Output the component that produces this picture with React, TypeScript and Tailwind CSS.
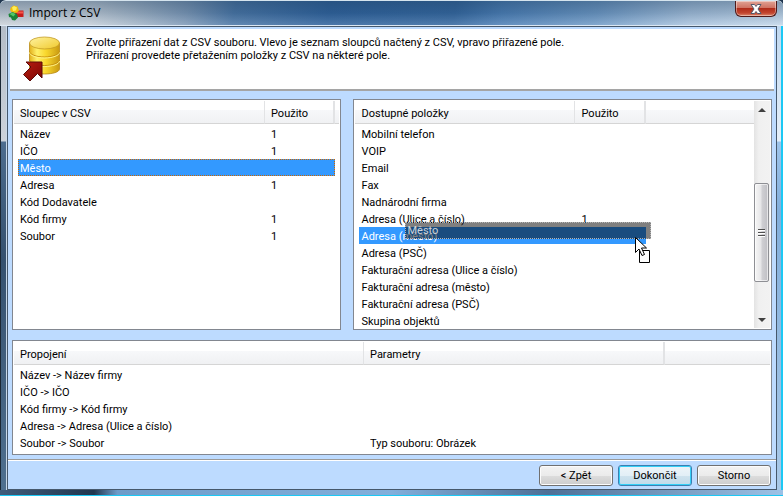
import { useState } from "react";
import clsx from "clsx";

type Row = { name: string; value?: string };

const CSV_COLUMNS: Row[] = [
  { name: "Název", value: "1" },
  { name: "IČO", value: "1" },
  { name: "Město" },
  { name: "Adresa", value: "1" },
  { name: "Kód Dodavatele" },
  { name: "Kód firmy", value: "1" },
  { name: "Soubor", value: "1" },
];

const FIELDS: Row[] = [
  { name: "Mobilní telefon" },
  { name: "VOIP" },
  { name: "Email" },
  { name: "Fax" },
  { name: "Nadnárodní firma" },
  { name: "Adresa (Ulice a číslo)", value: "1" },
  { name: "Adresa (město)" },
  { name: "Adresa (PSČ)" },
  { name: "Fakturační adresa (Ulice a číslo)" },
  { name: "Fakturační adresa (město)" },
  { name: "Fakturační adresa (PSČ)" },
  { name: "Skupina objektů" },
];

const LINKS: Row[] = [
  { name: "Název -> Název firmy" },
  { name: "IČO -> IČO" },
  { name: "Kód firmy -> Kód firmy" },
  { name: "Adresa -> Adresa (Ulice a číslo)" },
  { name: "Soubor -> Soubor", value: "Typ souboru: Obrázek" },
];

const panelClass = "border border-[#828790] bg-white p-px";

const headClass =
  "h-[23px] border-b border-[#d5d5d5] bg-[linear-gradient(to_bottom,#ffffff_9px,#f7f8fa_9px,#f0f1f3)] p-0 pt-[3px] pl-[6px] text-left leading-4 font-normal";

const cellClass = "h-[17px] truncate leading-[19px]";

const buttonClass =
  "h-[21px] w-[74px] rounded-[3px] border border-[#707070] bg-[linear-gradient(to_bottom,#f3f3f3,#ebebeb_50%,#dddddd_50%,#cdcdcd)] text-center leading-none shadow-[inset_0_0_0_1px_#fcfcfc]";

type ListProps = {
  columns: [string, string];
  widths: [string, string];
  rows: Row[];
  selected?: number;
  focused?: boolean;
  onSelect?: (index: number) => void;
};

function ListTable({ columns, widths, rows, selected, focused, onSelect }: ListProps) {
  return (
    <table className="w-full table-fixed border-separate border-spacing-0">
      <colgroup>
        <col className={widths[0]} />
        <col className={widths[1]} />
        <col />
      </colgroup>
      <thead>
        <tr>
          <th className={clsx(headClass, "border-r border-r-[#e2e3e5]")}>{columns[0]}</th>
          <th className={clsx(headClass, "border-r-2 border-r-[#e2e3e5]")}>{columns[1]}</th>
          <td className={headClass} />
        </tr>
        <tr className="h-px" />
      </thead>
      <tbody>
        {rows.map((row, i) => {
          const active = i === selected;
          return (
            <tr key={row.name} onClick={() => onSelect?.(i)}>
              <td colSpan={active ? 2 : 1} className="p-0 pl-1">
                <div
                  className={clsx(
                    cellClass,
                    "pl-[2px]",
                    active && "bg-[#3399ff] text-white",
                    active && focused && "outline-1 -outline-offset-1 outline-dotted outline-[#cc6600]"
                  )}
                >
                  {row.name}
                </div>
              </td>
              {!active && (
                <td className="p-0 pl-[6px]">
                  <div className={cellClass}>{row.value}</div>
                </td>
              )}
              <td className="p-0" />
            </tr>
          );
        })}
      </tbody>
    </table>
  );
}

function AppIcon() {
  return (
    <svg viewBox="0 0 16 16" className="size-4" aria-hidden="true">
      <path d="M7 5.500h8.500V12H7z" fill="#c81c1c" />
      <path d="M9 6.500h6v2H9z" fill="#f4564c" />
      <path d="M3 2.500 5.500.5l4 1 1.500 4-2.500 2.500-4.500-.5L2 5z" fill="#f0bd0a" />
      <path d="M4 2.500 6 1l3 1.500-1 3-3 .5z" fill="#ffee58" />
      <path d="m.5 9 4-2 4.500 2 1 3.500L7 15.500l-3-.5-1-2.500L1 12z" fill="#1a8238" />
      <path d="m1.500 9 3-1.500L7.500 9l-2 2.500z" fill="#52c766" />
    </svg>
  );
}

function DatabaseIcon() {
  return (
    <svg viewBox="0 0 40 46" className="h-[46px] w-10" aria-hidden="true">
      <defs>
        <linearGradient id="gold">
          <stop offset="0" stopColor="#e3b01c" />
          <stop offset=".25" stopColor="#fff06a" />
          <stop offset=".55" stopColor="#f9d72c" />
          <stop offset="1" stopColor="#c99a12" />
        </linearGradient>
        <linearGradient id="lid" x1="0" y1="0" x2="1" y2="1">
          <stop offset="0" stopColor="#fff3a0" />
          <stop offset="1" stopColor="#f0c92c" />
        </linearGradient>
        <linearGradient id="arrow" x1="0" y1="0" x2="1" y2="1">
          <stop offset="0" stopColor="#b81c10" />
          <stop offset="1" stopColor="#7d0805" />
        </linearGradient>
      </defs>
      <path
        d="M7.500 7v26c0 3 7 5 15 5s15-2 15-5V7z"
        fill="url(#gold)"
        stroke="#b98a1a"
        strokeWidth=".8"
      />
      <path d="M7.500 15.500c0 3 7 5.500 15 5.500s15-2.500 15-5.500" fill="none" stroke="#c8900c" />
      <path d="M7.500 16.500c0 3 7 5.500 15 5.500s15-2.500 15-5.500" fill="none" stroke="#fff38a" />
      <path d="M7.500 24c0 3 7 5.500 15 5.500s15-2.500 15-5.500" fill="none" stroke="#c8900c" />
      <path d="M7.500 25c0 3 7 5.500 15 5.500s15-2.500 15-5.500" fill="none" stroke="#fff38a" />
      <ellipse cx="22.500" cy="7" rx="15" ry="6" fill="url(#lid)" stroke="#c39a25" strokeWidth=".8" />
      <path d="M4 26h16v16l-4.500-4.500L8 45l-6.500-6.500L9 31z" fill="url(#arrow)" stroke="#5c0a08" />
    </svg>
  );
}

function DragCursor() {
  return (
    <svg
      viewBox="0 0 16 26"
      className="absolute top-[15px] left-[230px] h-[26px] w-4"
      aria-hidden="true"
    >
      <path d="M4.500 13.500h10v12h-10z" fill="#fff" stroke="#000" />
      <path d="M.5.500v15l3.500-3.500 3 6.500 2.500-1-3-6.500h5z" fill="#fff" stroke="#000" />
    </svg>
  );
}

function ScrollBar() {
  return (
    <div className="flex w-4 shrink-0 flex-col bg-[linear-gradient(to_right,#e3e3e3,#f0f0f0_30%,#f2f2f2)]">
      <button type="button" aria-label="Nahoru" className="flex h-[17px] items-center justify-center">
        <svg viewBox="0 0 8 4" className="h-1 w-2">
          <path d="M4 0 8 4H0z" fill="#404040" />
        </svg>
      </button>
      <div className="flex grow flex-col">
        <div className="flex-[65]" />
        <div className="flex w-[15px] flex-[97] flex-col items-center justify-center gap-px rounded-xs border border-[#8e8f94] bg-[linear-gradient(to_right,#f6f6f6,#e6e6e8_45%,#cfcfd3_55%,#bfbfc4)] shadow-[inset_0_0_0_1px_#ffffff99]">
          {[0, 1, 2].map((n) => (
            <span key={n} className="h-[2px] w-[7px] border-t border-[#505050] bg-white" />
          ))}
        </div>
        <div className="flex-[29]" />
      </div>
      <button type="button" aria-label="Dolů" className="flex h-[17px] items-center justify-center">
        <svg viewBox="0 0 8 4" className="h-1 w-2">
          <path d="M0 0h8L4 4z" fill="#404040" />
        </svg>
      </button>
    </div>
  );
}

export default function App() {
  const [column, setColumn] = useState(2);
  const [field, setField] = useState(6);

  return (
    <div className="flex h-screen flex-col overflow-hidden bg-[#20364f] font-['Roboto','Liberation_Sans',sans-serif] text-[11px] text-black">
      {/* Titulek okna */}
      <header className="flex h-[26px] shrink-0 items-start justify-between rounded-t-md border-t border-b border-t-[#d5e4ee] border-b-[#dce8f4] bg-[linear-gradient(to_bottom,#1c3c5c66,#1c3c5c33_50%,#ffffff22),linear-gradient(100deg,#ccd3da,#c4ced8_12%,#a9bacb_17%,#7f9ab8_24%,#4a76a6_30%,#2f629c_42%,#34679f_58%,#4c7fb6_64%,#6f9ac6_76%,#a9c3de_88%,#c3d7ea)]">
        <div className="flex h-6 items-center gap-[5px] pl-2">
          <AppIcon />
          <h1 className="font-['Open_Sans','Noto_Sans',sans-serif] text-[12px] leading-4">Import z CSV</h1>
        </div>
        <button
          type="button"
          aria-label="Zavřít"
          className="mr-[6px] flex h-4 w-[42px] items-center justify-center rounded-b-md border border-t-0 border-[#4e1a1a] bg-[linear-gradient(to_bottom,#e0a395,#cf7363_45%,#b02d1b_50%,#c2452f_80%,#dd8a70)] shadow-[inset_0_0_0_1px_#ffffff66]"
        >
          <svg viewBox="0 0 12 10" className="h-[10px] w-3">
            <path d="M1 .5h3.500L6 2.500 7.500.5H11L8 5l3 4.500H7.500L6 7.500l-1.500 2H1L4 5z" fill="#fff" stroke="#555a6b" />
          </svg>
        </button>
      </header>

      <div className="flex min-h-0 grow">
        <div className="w-[7px] shrink-0 border-r border-l border-r-[#c8d8e8] border-l-[#1b2733] bg-[linear-gradient(to_bottom,#b4bdc8,#ccd2da_115px,#4c6c8e_116px,#35516f_50%,#4f708f)]" />

        <main className="flex min-w-0 grow flex-col border border-[#46586c] bg-[#bddbff] px-[2px] pt-[2px]">
          <div className="flex h-[62px] shrink-0 items-start gap-[24px] border-b-2 border-[#a5a5a5] bg-white pt-[7px] pl-3">
            <DatabaseIcon />
            <p className="leading-[13px]">
              Zvolte přiřazení dat z CSV souboru. Vlevo je seznam sloupců načtený z CSV, vpravo přiřazené pole.
              <br />
              Přiřazení provedete přetažením položky z CSV na některé pole.
            </p>
          </div>

          <div className="flex min-h-0 grow gap-3 px-[2px] pt-2 pb-[10px]">
            <section className={clsx(panelClass, "min-w-0 flex-[329] overflow-hidden")}>
              <ListTable
                columns={["Sloupec v CSV", "Použito"]}
                widths={["w-[251px]", "w-[70px]"]}
                rows={CSV_COLUMNS}
                selected={column}
                focused
                onSelect={setColumn}
              />
            </section>

            <section className={clsx(panelClass, "relative flex min-w-0 flex-[419]")}>
              <div className="min-w-0 grow overflow-hidden">
                <ListTable
                  columns={["Dostupné položky", "Použito"]}
                  widths={["w-[220px]", "w-[71px]"]}
                  rows={FIELDS}
                  selected={field}
                  onSelect={setField}
                />
              </div>
              <ScrollBar />
              {/* Přetahovaná položka */}
              <div className="pointer-events-none absolute top-[122px] left-[51px] w-[246px]">
                <div className="h-[17px] border border-dotted border-[#b5b5b5] bg-black/50 pl-px leading-[15px] text-[#cfd4da]">
                  Město
                </div>
                <DragCursor />
              </div>
            </section>
          </div>

          <section className={clsx(panelClass, "mx-[2px] h-[115px] shrink-0 overflow-hidden")}>
            <ListTable columns={["Propojení", "Parametry"]} widths={["w-[350px]", "w-[301px]"]} rows={LINKS} />
          </section>

          <footer className="-mx-[2px] mt-1 flex h-[30px] shrink-0 justify-end gap-[5px] border-t border-[#9a9a9a] pt-[5px] pr-[5px] shadow-[inset_0_1px_0_#ffffff]">
            <button type="button" className={buttonClass}>
              &lt; Zpět
            </button>
            <button
              type="button"
              className="h-[21px] w-[74px] rounded-[3px] border border-[#3c7fb1] bg-[linear-gradient(to_bottom,#eef5f9,#e2eff6_50%,#cfe3ee_50%,#c0dbea)] text-center leading-none shadow-[inset_0_0_0_1px_#34d0f8]"
            >
              Dokončit
            </button>
            <button type="button" className={buttonClass}>
              Storno
            </button>
          </footer>
        </main>

        <div className="w-[6px] shrink-0 border-r-2 border-[#1cc8f4] bg-[linear-gradient(to_bottom,#c0d8f0,#e6eff8_115px,#9fc4ea_116px,#82aedb_40%,#a9c9e8)]" />
      </div>

      <div className="h-[6px] shrink-0 border-b border-[#1cc8f4] bg-[linear-gradient(to_right,#3f5c7b,#20364f_12%,#6e9cc9_15%,#82afdb_50%,#4d7097_70%,#9dc2e6)]" />
    </div>
  );
}
